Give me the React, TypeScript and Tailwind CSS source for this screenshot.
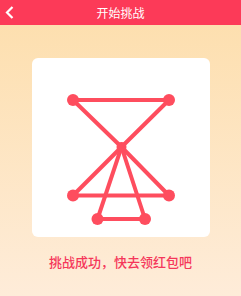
const dots: [number, number][] = [
  [73, 100],
  [169, 100],
  [121.5, 147],
  [73, 195.5],
  [169, 195.5],
  [97.5, 219],
  [145, 219],
];

const lines: [number, number][] = [
  [0, 1],
  [0, 2],
  [1, 2],
  [2, 3],
  [2, 4],
  [3, 4],
  [2, 5],
  [2, 6],
  [5, 6],
];

function Pattern() {
  // coords are page coords; card starts at (32, 58)
  return (
    <svg width="178" height="179" viewBox="32 58 178 179">
      {lines.map(([a, b], i) => (
        <line
          key={i}
          x1={dots[a][0]}
          y1={dots[a][1]}
          x2={dots[b][0]}
          y2={dots[b][1]}
          stroke="#fe4d5e"
          strokeWidth="4"
          strokeLinecap="round"
        />
      ))}
      {dots.map(([x, y], i) => (
        <circle key={i} cx={x} cy={y} r={i === 2 ? 5 : 6} fill="#fe4d5e" />
      ))}
    </svg>
  );
}

export default function App() {
  return (
    <div
      className="flex h-[296px] w-[241px] flex-col bg-gradient-to-b from-[#fddeab] to-[#feecd9]"
      style={{ fontFamily: '"Noto Sans CJK SC", "Liberation Sans", sans-serif' }}
    >
      <header className="relative flex h-[25px] items-center justify-center bg-[#fc3a58]">
        <svg className="absolute left-[5px] top-[6px]" width="9" height="13" viewBox="0 0 9 13">
          <path d="M7.5 1 L2 6.5 L7.5 12" fill="none" stroke="white" strokeWidth="2.2" />
        </svg>
        <span className="text-[12px] leading-none text-white">开始挑战</span>
      </header>
      <div className="ml-[32px] mt-[33px] h-[179px] w-[178px] rounded-[6px] bg-white">
        <Pattern />
      </div>
      <p className="mt-[16px] text-center text-[13px] font-medium leading-[18px] text-[#f5375a]">
        挑战成功，快去领红包吧
      </p>
    </div>
  );
}
